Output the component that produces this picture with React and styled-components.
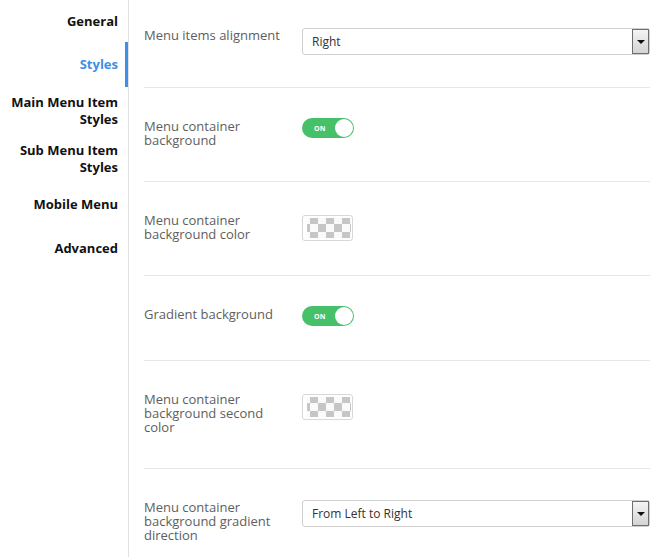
import React from 'react'
import styled, { createGlobalStyle } from 'styled-components'

const GlobalStyle = createGlobalStyle`
  html, body {
    margin: 0;
    padding: 0;
    background: #fff;
  }
  body {
    font-family: 'Open Sans', 'Noto Sans', sans-serif;
    -webkit-font-smoothing: antialiased;
  }
`

const Page = styled.div`
  display: flex;
  min-height: 557px;
`

// Left tab list
const Sidebar = styled.nav`
  width: 128px;
  flex-shrink: 0;
  border-right: 1px solid #e2e2e2;
  display: flex;
  flex-direction: column;
`

const Tab = styled.div`
  height: ${props => props.$height}px;
  box-sizing: border-box;
  display: flex;
  flex-direction: column;
  align-items: flex-end;
  justify-content: center;
  text-align: right;
  padding-right: ${props => props.$active ? 7 : 10}px;
  border-right: ${props => props.$active ? '3px solid #3d8fe8' : 'none'};
  font-size: 13px;
  font-weight: 700;
  line-height: 17px;
  color: ${props => props.$active ? '#3d8fe8' : '#111'};
`

const Content = styled.main`
  flex: 1;
  padding: 0 11px 0 15px;
`

const Row = styled.div`
  display: flex;
  align-items: flex-start;
  padding: ${props => props.$first ? 28 : 31}px 0 ${props => props.$first ? 32 : 34}px;
  border-bottom: ${props => props.$last ? 'none' : '1px solid #e6e6e6'};
`

const Label = styled.div`
  width: 146px;
  margin-right: 12px;
  flex-shrink: 0;
  font-size: 13px;
  line-height: 14px;
  color: #5e5e5e;
`

const Field = styled.div`
  flex: 1;
  display: flex;
`

const Select = styled.div`
  flex: 1;
  height: 27px;
  box-sizing: border-box;
  border: 1px solid #cfcfcf;
  border-radius: 3px;
  display: flex;
  align-items: stretch;
  padding-left: 9px;
  font-size: 12px;
  color: #333;
`

const SelectValue = styled.span`
  flex: 1;
  display: flex;
  align-items: center;
`

const DropButton = styled.span`
  width: 15px;
  border: 1px solid #6f6f6f;
  background: linear-gradient(#f4f4f4, #d4d4d4);
  display: flex;
  align-items: center;
  justify-content: center;

  &::after {
    content: '';
    border-left: 4px solid transparent;
    border-right: 4px solid transparent;
    border-top: 4px solid #111;
  }
`

const Toggle = styled.div`
  width: 52px;
  height: 20px;
  margin-top: -1px;
  box-sizing: border-box;
  border-radius: 10px;
  background: #47c169;
  display: flex;
  align-items: center;
  justify-content: space-between;
  padding: 0 1px 0 12px;
`

const ToggleText = styled.span`
  font-family: 'Open Sans', sans-serif;
  font-size: 7px;
  font-weight: 700;
  color: #fff;
  letter-spacing: 0.2px;
`

const Knob = styled.span`
  width: 18px;
  height: 18px;
  border-radius: 50%;
  background: #fff;
`

const Swatch = styled.div`
  width: 51px;
  height: 26px;
  margin-top: 2px;
  box-sizing: border-box;
  border: 1px solid #d8d8d8;
  border-radius: 3px;
  padding: 2px 1px 2px 4px;
  display: flex;
`

const Checker = styled.span`
  flex: 1;
  background: repeating-conic-gradient(#c6c6c6 0 25%, #fafafa 0 50%) -5px -2px / 16px 16px;
`

const SelectField = ({ value }) => (
  <Select>
    <SelectValue>{value}</SelectValue>
    <DropButton />
  </Select>
)

const SwitchField = () => (
  <Toggle>
    <ToggleText>ON</ToggleText>
    <Knob />
  </Toggle>
)

const ColorField = () => (
  <Swatch>
    <Checker />
  </Swatch>
)

const tabs = [
  { lines: ['General'], height: 42 },
  { lines: ['Styles'], height: 45, active: true },
  { lines: ['Main Menu Item', 'Styles'], height: 48 },
  { lines: ['Sub Menu Item', 'Styles'], height: 47 },
  { lines: ['Mobile Menu'], height: 44 },
  { lines: ['Advanced'], height: 45 },
]

export default function App() {
  return (
    <Page>
      <GlobalStyle />
      <Sidebar>
        {tabs.map((tab, i) => (
          <Tab key={i} $height={tab.height} $active={tab.active}>
            {tab.lines.map(line => <span key={line}>{line}</span>)}
          </Tab>
        ))}
      </Sidebar>
      <Content>
        <Row $first>
          <Label>Menu items alignment</Label>
          <Field><SelectField value="Right" /></Field>
        </Row>
        <Row>
          <Label>Menu container background</Label>
          <Field><SwitchField /></Field>
        </Row>
        <Row>
          <Label>Menu container background color</Label>
          <Field><ColorField /></Field>
        </Row>
        <Row>
          <Label>Gradient background</Label>
          <Field><SwitchField /></Field>
        </Row>
        <Row>
          <Label>Menu container background second color</Label>
          <Field><ColorField /></Field>
        </Row>
        <Row $last>
          <Label>Menu container background gradient direction</Label>
          <Field><SelectField value="From Left to Right" /></Field>
        </Row>
      </Content>
    </Page>
  )
}
